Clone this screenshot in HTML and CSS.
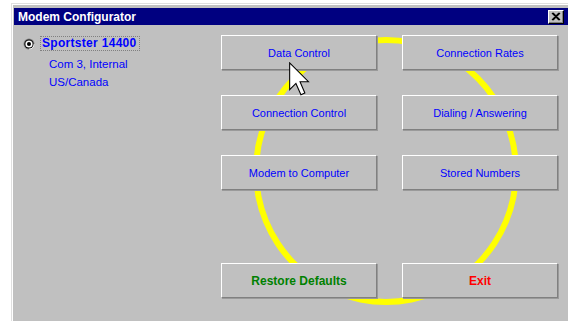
FILE: index.html
```html
<!DOCTYPE html>
<html lang="en">

<head>
    <meta charset="UTF-8">
    <title>Modem Configurator</title>
    <link rel="stylesheet" href="styles.css">
</head>

<body>
    <div class="window">
        <header class="titlebar">
            <span class="title">Modem Configurator</span>
            <button class="close" type="button" aria-label="Close">
                <svg width="10" height="9" viewBox="0 0 10 9">
                    <path d="M1 1 L8 8 M2 1 L9 8 M8 1 L1 8 M9 1 L2 8" stroke="#000" stroke-width="1.2" fill="none"/>
                </svg>
            </button>
        </header>

        <main class="content">
            <div class="ring"></div>

            <section class="modem-info">
                <label class="modem-choice">
                    <svg class="radio" width="12" height="12" viewBox="0 0 12 12">
                        <circle cx="6" cy="6" r="5.5" fill="#808080"/>
                        <path d="M11.5 6 A5.5 5.5 0 0 1 6 11.5 L6 6 Z" fill="#ffffff"/>
                        <circle cx="6" cy="6" r="4.6" fill="#000000"/>
                        <circle cx="6" cy="6" r="3.6" fill="#ffffff"/>
                        <circle cx="6" cy="6" r="2" fill="#000000"/>
                    </svg>
                    <span class="modem-name">Sportster 14400</span>
                </label>
                <div class="modem-detail">Com 3, Internal</div>
                <div class="modem-detail">US/Canada</div>
            </section>

            <section class="actions">
                <button class="button" type="button">Data Control</button>
                <button class="button" type="button">Connection Rates</button>
                <button class="button" type="button">Connection Control</button>
                <button class="button" type="button">Dialing / Answering</button>
                <button class="button" type="button">Modem to Computer</button>
                <button class="button" type="button">Stored Numbers</button>
                <button class="button button-bottom button-green" type="button">Restore Defaults</button>
                <button class="button button-bottom button-red" type="button">Exit</button>
            </section>

            <!-- mouse pointer over Data Control -->
            <svg class="pointer" width="23" height="34" viewBox="0 0 12 19">
                <path d="M0.5 0.5 L0.5 15.5 L4 12 L6.8 18.3 L9 17.3 L6.3 11 L11 11 Z" fill="#fff" stroke="#000" stroke-width="0.6" stroke-linejoin="miter"/>
            </svg>
        </main>
    </div>
</body>

</html>
```

FILE: styles.css
```css
html,
body {
    margin: 0;
    padding: 0;
    background-color: #ffffff;
    overflow: hidden;
}

body {
    font-family: "Liberation Sans", Arial, sans-serif;
    width: 568px;
    height: 321px;
}

.window {
    margin: 3px 0 0 11px;
    width: 557px;
    height: 318px;
    box-sizing: border-box;
    background-color: #c0c0c0;
    border-top: 1px solid #dfdfdf;
    border-left: 1px solid #dfdfdf;
    box-shadow: inset 1px 1px #ffffff;
    padding: 4px 0 0 2px;
    overflow: hidden;
}

.titlebar {
    height: 17px;
    background-color: #000080;
    display: flex;
    align-items: center;
    padding-left: 4px;
}

.title {
    color: #ffffff;
    font-weight: bold;
    font-size: 12px;
    flex: 1;
}

.close {
    width: 16px;
    height: 14px;
    margin-right: 4px;
    padding: 0;
    background-color: #c0c0c0;
    border: 1px solid;
    border-color: #ffffff #000000 #000000 #ffffff;
    box-shadow: inset -1px -1px #808080;
    display: flex;
    align-items: center;
    justify-content: center;
}

.content {
    position: relative;
    display: flex;
    height: 296px;
}

.ring {
    position: absolute;
    left: 239px;
    top: 12px;
    width: 266px;
    height: 268px;
    box-sizing: border-box;
    border: 6px solid #ffff00;
    border-radius: 50%;
}

.modem-info {
    width: 198px;
    padding: 11px 0 0 9px;
    position: relative;
}

.modem-choice {
    display: flex;
    align-items: center;
    gap: 5px;
}

.modem-name {
    color: #0000ff;
    font-weight: bold;
    font-size: 12px;
    letter-spacing: 0.3px;
    padding: 0 2px 0 1px;
    border: 1px dotted #808080;
    line-height: 13px;
}

.modem-detail {
    color: #0000ff;
    font-size: 11.5px;
    margin-left: 26px;
    line-height: 18px;
}

.modem-choice + .modem-detail {
    margin-top: 4px;
}

.actions {
    position: relative;
    display: grid;
    grid-template-columns: 156px 156px;
    grid-template-rows: 35px 35px 35px 23px 35px;
    column-gap: 25px;
    row-gap: 25px;
    padding-top: 10px;
    align-content: start;
}

.button {
    font-family: "Liberation Sans", Arial, sans-serif;
    font-size: 11px;
    color: #0000ff;
    background-color: #c0c0c0;
    border: 1px solid;
    border-color: #ffffff #808080 #808080 #ffffff;
    box-shadow: 1px 1px #9a9a9a;
    padding: 0;
}

.button-bottom {
    grid-row: 5;
    font-size: 12px;
    font-weight: bold;
}

.button-green {
    color: #008000;
}

.button-red {
    color: #ff0000;
}

.pointer {
    position: absolute;
    left: 274px;
    top: 37px;
}
```
